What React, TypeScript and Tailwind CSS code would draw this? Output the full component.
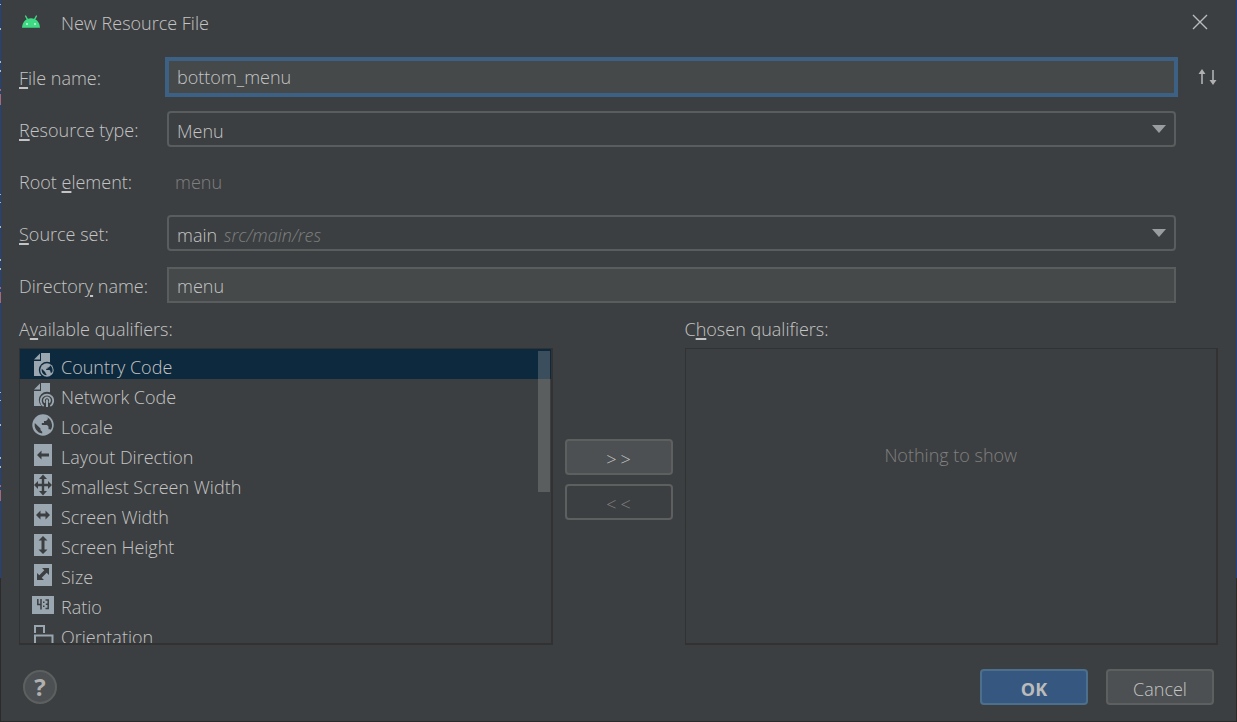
import { useState, type ReactNode } from "react";

const ICON = "#9aa7b0";
const HOLE = "#3c3f41";

function AndroidLogo() {
  return (
    <svg width="20" height="14" viewBox="0 0 20 14" className="shrink-0">
      <path d="M4.6 1 6.3 4.2M15.4 1l-1.7 3.2" stroke="#3ddc84" strokeWidth="1.4" strokeLinecap="round" />
      <path d="M1 12.7C1.3 7 5 3.2 10 3.2s8.7 3.8 9 9.5z" fill="#3ddc84" />
      <circle cx="6" cy="9" r="0.9" fill="#d9f8e6" />
      <circle cx="14" cy="9" r="0.9" fill="#d9f8e6" />
    </svg>
  );
}

function Globe({ bg }: { bg: string }) {
  return (
    <>
      <circle cx="11" cy="11" r="10.7" fill={ICON} />
      <path
        d="M2.800 9 8.500 14.500v1.500l1.700 1.800v1.700C5.500 18.900 1.800 14.500 2.800 9zM14 2.800l1.800.8v1.700L14 7h-2v2H9.800v2H15l1.500 1.500v2.700h1.500l.8.6c1-1.500 1.400-3.200 1.200-5C19.500 6.800 17.500 4 14 2.800z"
        fill={bg}
      />
    </>
  );
}

function PageIcon({ bg, children }: { bg: string; children: ReactNode }) {
  return (
    <svg width="22" height="24" viewBox="0 0 22 24">
      <path d="M9 0h9v23H2V8h7z" fill={ICON} />
      <path d="M2 6.500 8 .5v6z" fill={ICON} />
      <circle cx="15" cy="17" r="8.200" fill={bg} />
      {children}
    </svg>
  );
}

function Tile({ d }: { d: string }) {
  return (
    <svg width="22" height="24" viewBox="0 0 22 24">
      <path d="M2 1h18v22H2z" fill={ICON} />
      <path d={d} fill={HOLE} />
    </svg>
  );
}

function QualifierIcon({ name, bg }: { name: string; bg: string }) {
  switch (name) {
    case "Country Code":
      return (
        <PageIcon bg={bg}>
          <g transform="translate(8 10) scale(.63)">
            <Globe bg={bg} />
          </g>
        </PageIcon>
      );
    case "Network Code":
      return (
        <PageIcon bg={bg}>
          <g fill="none" stroke={ICON} strokeWidth="1.8">
            <path d="M11.700 23a6.200 6.200 0 1 1 6.600 0" />
            <path d="M13 19.600a3 3 0 1 1 4 0" />
          </g>
          <path d="M14 16.500h2V24h-2z" fill={ICON} />
        </PageIcon>
      );
    case "Locale":
      return (
        <svg width="22" height="24" viewBox="0 0 22 24">
          <g transform="translate(0 1)">
            <Globe bg={bg} />
          </g>
        </svg>
      );
    case "Layout Direction":
      return <Tile d="M5 12 9.500 7.500v3H17v3H9.500v3z" />;
    case "Smallest Screen Width":
      return (
        <Tile d="M11 1.500 15 6h-2.800v4.800H16V8l4 4-4 4v-2.800h-3.800V18H15l-4 4.500L7 18h2.800v-4.800H6V16l-4-4 4-4v2.800h3.800V6H7z" />
      );
    case "Screen Width":
      return <Tile d="M4 12 8.500 7.500v3h5v-3L18 12l-4.500 4.500v-3h-5v3z" />;
    case "Screen Height":
      return <Tile d="M11 3l4.500 4.500h-3v9h3L11 21l-4.500-4.500h3v-9h-3z" />;
    case "Size":
      return <Tile d="M17 5v7l-2.300-2.300-5 5L12 17H5v-7l2.300 2.300 5-5L10 5z" />;
    case "Ratio":
      return (
        <svg width="22" height="24" viewBox="0 0 22 24">
          <path d="M0 3h22v18H0z" fill={ICON} />
          <path
            d="M5.800 6v5.500h3M9 6v10.500M13.500 7h2.700v8.500h-2.700M13.800 11.200h2.400"
            fill="none"
            stroke={HOLE}
            strokeWidth="1.5"
          />
          <path d="M11 8.500h1.500V10H11zM11 12.500h1.500V14H11z" fill={HOLE} />
        </svg>
      );
    default:
      return (
        <svg width="22" height="24" viewBox="0 0 22 24">
          <path d="M3 10V3h9v7M3 24V12.500h17.500V24" fill="none" stroke={ICON} strokeWidth="2" />
        </svg>
      );
  }
}

const qualifiers = [
  "Country Code",
  "Network Code",
  "Locale",
  "Layout Direction",
  "Smallest Screen Width",
  "Screen Width",
  "Screen Height",
  "Size",
  "Ratio",
  "Orientation",
];

function Mnemonic({ children }: { children: string }) {
  return <span className="underline decoration-2 underline-offset-2">{children}</span>;
}

// sliver of the editor window that shows beside the dialog
function EditorEdge({ marks }: { marks?: boolean }) {
  return (
    <div className="flex w-px flex-col">
      <div className="flex-[4] bg-[#214283]">
        {marks && (
          <svg width="1" height="560" viewBox="0 0 1 560">
            {[0, 198, 396].map((y) => (
              <g key={y}>
                <path
                  d={`M0 ${y - 4}h1v1H0zM0 ${y + 4}h1v1H0zM0 ${y + 28}h1v2H0zM0 ${y + 61}h1v2H0zM0 ${y + 70}h1v2H0z`}
                  fill="#a9b7c6"
                />
                <path d={`M0 ${y + 89}h1v2H0zM0 ${y + 94}h1v11H0z`} fill="#a06a84" />
              </g>
            ))}
          </svg>
        )}
      </div>
      <div className="flex-1 bg-[#2b2b2b]" />
    </div>
  );
}

interface ComboProps {
  id: string;
  value: string;
  hint?: string;
}

function Combo({ id, value, hint }: ComboProps) {
  return (
    <div className="relative">
      <select
        id={id}
        className="block h-9 w-full appearance-none rounded border-2 border-[#5a5d5e] bg-[#3c3f41] px-2 text-transparent outline-none"
      >
        <option>{value}</option>
      </select>
      <div className="pointer-events-none absolute inset-0 flex items-center justify-between px-2.5 pt-1">
        <span>
          {value} {hint && <i className="ml-0.5 text-[#7d7f80]">{hint}</i>}
        </span>
        <svg width="14" height="8" viewBox="0 0 14 8" className="mb-1">
          <path d="M0 0h14L7 8z" fill="#9a9da0" />
        </svg>
      </div>
    </div>
  );
}

export default function App() {
  const [fileName, setFileName] = useState("bottom_menu");
  const [directory, setDirectory] = useState("menu");
  const [selected, setSelected] = useState("Country Code");

  return (
    <div className="flex min-h-screen font-['Open_Sans','Noto_Sans_CJK_KR',sans-serif] text-lg font-light text-[#c4c4c4]">
      <EditorEdge marks />
      <div className="flex flex-1 flex-col border-b border-[#2b2b2b] bg-[#3c3f41]">
        <header className="flex h-[43px] items-center pr-7 pl-5">
          <AndroidLogo />
          <h1 className="ml-5 flex-1 pt-0.5">New Resource File</h1>
          <button aria-label="Close">
            <svg width="16" height="16" viewBox="0 0 16 16">
              <path d="M1 1l14 14M15 1 1 15" stroke="#bbbbbb" strokeWidth="1.4" />
            </svg>
          </button>
        </header>

        <form className="mt-4 grid grid-cols-[148px_1fr_44px] items-center gap-y-4 pr-4 pl-[18px]">
          <label htmlFor="file-name" className="pt-0.5">
            <Mnemonic>F</Mnemonic>ile name:
          </label>
          <input
            id="file-name"
            value={fileName}
            onChange={(e) => setFileName(e.target.value)}
            className="h-9 w-full bg-[#45494a] px-2.5 outline-4 -outline-offset-2 outline-[#3d6185]"
          />
          <button type="button" aria-label="Reorder" className="mr-0.5 justify-self-end">
            <svg width="20" height="16" viewBox="0 0 20 16">
              <path d="M4 15V2M15 1v13" stroke="#afb1b3" strokeWidth="1.6" />
              <path d="M.5 5 4 0l3.500 5zM11.500 11l3.500 5 3.500-5z" fill="#afb1b3" />
            </svg>
          </button>

          <label htmlFor="resource-type" className="pt-0.5">
            <Mnemonic>R</Mnemonic>esource type:
          </label>
          <Combo id="resource-type" value="Menu" />
          <span />

          <label htmlFor="root-element" className="pt-0.5">
            Root <Mnemonic>e</Mnemonic>lement:
          </label>
          <input
            id="root-element"
            disabled
            defaultValue="menu"
            className="h-9 w-full px-2 pt-0.5 text-[#808080]"
          />
          <span />

          <label htmlFor="source-set" className="pt-0.5">
            <Mnemonic>S</Mnemonic>ource set:
          </label>
          <Combo id="source-set" value="main" hint="src/main/res" />
          <span />

          <label htmlFor="directory" className="pt-0.5">
            Director<Mnemonic>y</Mnemonic> name:
          </label>
          <input
            id="directory"
            value={directory}
            onChange={(e) => setDirectory(e.target.value)}
            className="h-9 w-full border-2 border-[#5a5d5e] bg-[#45494a] px-2 pt-0.5 outline-none"
          />
          <span />
        </form>

        <main className="mt-3 grid flex-1 grid-cols-[1fr_108px_1fr] gap-x-3 px-[18px]">
          <section>
            <h2 className="h-[33px] leading-7">
              A<Mnemonic>v</Mnemonic>ailable qualifiers:
            </h2>
            <div className="relative h-[297px] overflow-hidden border-2 border-t border-l border-[#323232]">
              <ul>
                {qualifiers.map((name) => (
                  <li key={name}>
                    <button
                      onClick={() => setSelected(name)}
                      className={`flex h-[30px] w-full items-center gap-[7px] pt-0.5 pl-3 text-left ${
                        selected === name ? "bg-[#0d293e]" : ""
                      }`}
                    >
                      <QualifierIcon name={name} bg={selected === name ? "#0d293e" : HOLE} />
                      <span className="pt-1">{name}</span>
                    </button>
                  </li>
                ))}
              </ul>
              <div className="absolute top-0.5 right-px h-[141px] w-3 bg-[#a6a6a6]/30" />
            </div>
          </section>

          <div className="flex flex-col gap-[9px] pt-[124px]">
            <button className="flex h-9 items-center justify-center gap-1 rounded border-2 border-[#5e6060] bg-[#4c5052] pt-1">
              <span>&gt;</span>
              <span>&gt;</span>
            </button>
            <button
              className="flex h-9 items-center justify-center gap-1 rounded border-2 border-[#5e6060] pt-1 text-[#808080]"
              disabled
            >
              <span>&lt;</span>
              <span>&lt;</span>
            </button>
          </div>

          <section>
            <h2 className="h-[33px] leading-7">
              C<Mnemonic>h</Mnemonic>osen qualifiers:
            </h2>
            <div className="h-[297px] border-2 border-t border-l border-[#323232] pt-[92px] text-center text-[#808080]">
              Nothing to show
            </div>
          </section>
        </main>

        <footer className="flex items-center gap-[18px] px-[22px] pt-6 pb-4">
          <button
            aria-label="Help"
            className="mr-auto flex size-[34px] items-center justify-center rounded-full border-2 border-[#5e6060] bg-[#4c5052] text-2xl font-bold text-[#b0b0b0]"
          >
            ?
          </button>
          <button className="h-9 w-[108px] rounded border-2 border-[#4c708c] bg-[#365880] pt-1 font-bold text-[#bbbbbb]">
            OK
          </button>
          <button className="h-9 w-[108px] rounded border-2 border-[#5e6060] bg-[#4c5052] pt-1">
            Cancel
          </button>
        </footer>
      </div>
      <EditorEdge />
    </div>
  );
}
